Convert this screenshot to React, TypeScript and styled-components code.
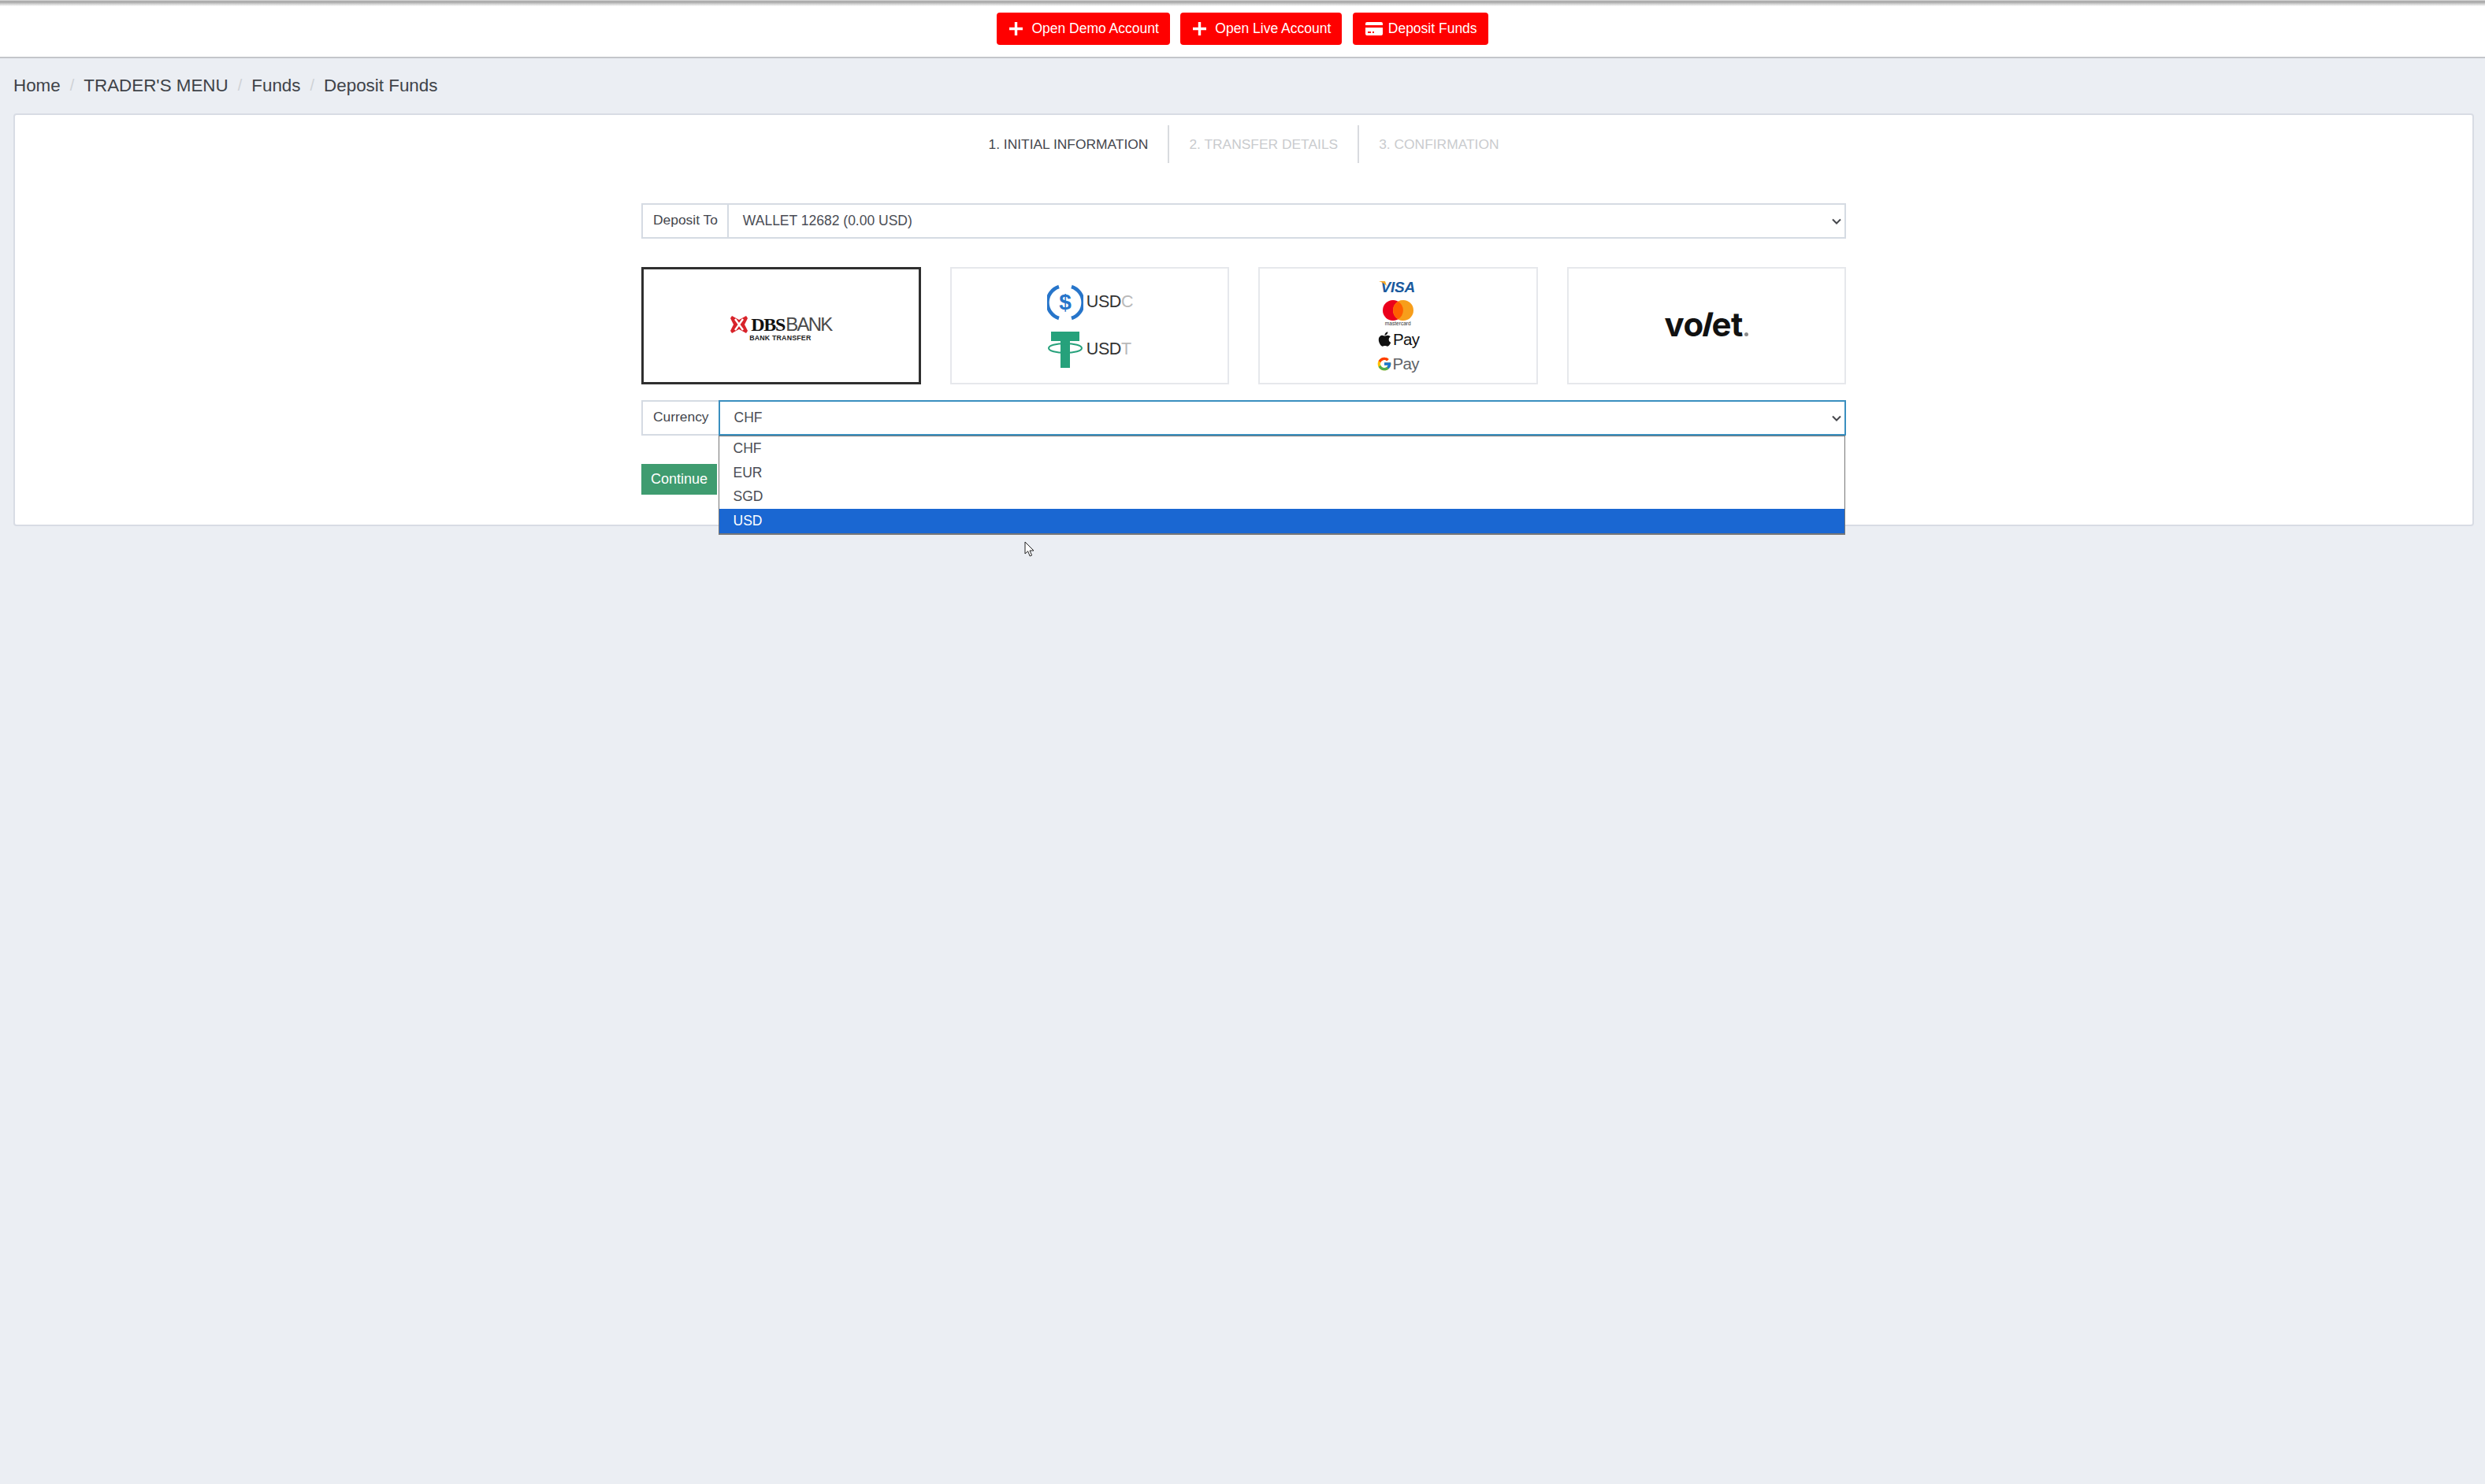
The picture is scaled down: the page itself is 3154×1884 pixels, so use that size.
import React from 'react';
import styled, {createGlobalStyle} from 'styled-components';
import {FaApple} from 'react-icons/fa';
import {FcGoogle} from 'react-icons/fc';

const GlobalStyle = createGlobalStyle`
  html, body {
    margin: 0;
    padding: 0;
    background: #ebeef3;
    font-family: "Liberation Sans", Arial, sans-serif;
  }
  * {
    box-sizing: border-box;
  }
`;

const Page = styled.div`
  width: 3154px;
  height: 1884px;
  background: #ebeef3;
  overflow: hidden;
`;

const TopBar = styled.div`
  height: 74px;
  padding: 16px 0 0 0;
  display: flex;
  justify-content: center;
  gap: 13.5px;
  background: linear-gradient(#e0e0e0 0, #a0a0a0 2px, #ffffff 8px);
  border-bottom: 2px solid #c4c6ca;
`;

const RedButton = styled.div`
  height: 41px;
  padding: 0 14px 0 16px;
  display: flex;
  align-items: center;
  gap: ${props => (props.$wide ? '7px' : '11px')};
  background: #ff0000;
  border-radius: 4px;
  color: #ffffff;
  font-size: 17.5px;
`;

const Breadcrumb = styled.div`
  height: 70px;
  padding: 0 0 1px 17px;
  display: flex;
  align-items: center;
  font-size: 22.4px;
  color: #3f4349;
`;

const CrumbSlash = styled.span`
  margin: 0 12px;
  color: #cfd2d6;
  font-size: 20px;
`;

const Card = styled.div`
  margin: 0 14px 0 17px;
  height: 524px;
  padding-top: 13px;
  background: #ffffff;
  border: 2px solid #d8dce4;
  border-radius: 4px;
`;

const Steps = styled.div`
  display: flex;
  justify-content: center;
`;

const Step = styled.div`
  height: 48px;
  padding: 0 25px;
  display: flex;
  align-items: center;
  font-size: 17.4px;
  color: ${props => (props.$active ? '#43464d' : '#c9cbce')};
  border-right: ${props => (props.$last ? 'none' : '2px solid #d9dbdf')};
`;

const Form = styled.div`
  width: 1529px;
  margin: 51px auto 0;
`;

const InputRow = styled.div`
  height: 45px;
  margin-top: ${props => props.$top || 0}px;
  display: flex;
`;

const InputLabel = styled.div`
  padding: 0 12px 2px 13px;
  display: flex;
  align-items: center;
  background: #ffffff;
  border: 2px solid #d5dbe3;
  border-right: none;
  font-size: 17.4px;
  color: #43464d;
`;

const SelectWrap = styled.div`
  position: relative;
  flex: 1;
`;

const SelectBox = styled.div`
  height: 45px;
  padding: 0 4px 0 18px;
  display: flex;
  align-items: center;
  justify-content: space-between;
  background: #ffffff;
  border: 2px solid ${props => (props.$focused ? '#3a8fbf' : '#d5dbe3')};
  font-size: 17.5px;
  color: #4a4d55;
`;

const DropList = styled.div`
  position: absolute;
  top: 45px;
  left: 0;
  right: 1px;
  z-index: 5;
  background: #ffffff;
  border: 1px solid #767676;
  border-bottom: 2px solid #767676;
`;

const Option = styled.div`
  height: 30.8px;
  padding-left: 18px;
  display: flex;
  align-items: center;
  font-size: 17.5px;
  background: ${props => (props.$selected ? '#1a67d2' : '#ffffff')};
  color: ${props => (props.$selected ? '#ffffff' : '#4a4d55')};
`;

const Pointer = styled.svg`
  position: absolute;
  left: 388px;
  top: 179px;
  z-index: 6;
`;

const Methods = styled.div`
  margin-top: 36px;
  display: grid;
  grid-template-columns: repeat(4, 1fr);
  gap: 37px;
`;

const Method = styled.div`
  height: 149px;
  display: flex;
  flex-direction: column;
  align-items: center;
  justify-content: center;
  border: ${props => (props.$active ? '3px solid #2f2f2f' : '2px solid #e6e8ec')};
`;

const Continue = styled.div`
  width: 96px;
  height: 39px;
  margin-top: 36px;
  display: flex;
  align-items: center;
  justify-content: center;
  background: #3f9c70;
  color: #ffffff;
  font-size: 18px;
`;

/* logos */
const DbsLogo = styled.div`
  display: flex;
  flex-direction: column;
  margin-top: 7px;
`;

const DbsTop = styled.div`
  display: flex;
  align-items: center;
  gap: 4px;
`;

const DbsName = styled.span`
  font-family: "Liberation Serif", serif;
  font-weight: 700;
  font-size: 24px;
  line-height: 24px;
  letter-spacing: -1.2px;
  color: #111111;
`;

const DbsBank = styled.span`
  font-family: "Liberation Sans", sans-serif;
  font-size: 24px;
  line-height: 24px;
  letter-spacing: -1.8px;
  margin-left: 1px;
  color: #4a4a4a;
`;

const DbsSub = styled.span`
  margin: 0 0 0 24px;
  font-size: 8.8px;
  line-height: 10px;
  font-weight: 700;
  letter-spacing: 0.2px;
  color: #222222;
`;

const CoinRow = styled.div`
  width: 108px;
  height: ${props => props.$height}px;
  margin-top: ${props => props.$top || 0}px;
  display: flex;
  align-items: center;
  gap: 4px;
`;

const CoinIconSlot = styled.span`
  display: flex;
  flex-shrink: 0;
`;

const CoinName = styled.span`
  font-size: 21.5px;
  letter-spacing: -0.4px;
  color: #333333;
`;

const CoinFade = styled.span`
  color: #b9b9b9;
`;

const VisaText = styled.span`
  position: relative;
  margin-top: 2px;
  font-size: 19px;
  line-height: 18px;
  font-weight: 700;
  font-style: italic;
  letter-spacing: -0.2px;
  color: #1a5a9e;
`;

const MasterBlock = styled.div`
  margin-top: 7px;
  display: flex;
  flex-direction: column;
  align-items: center;
`;

const MasterText = styled.span`
  font-size: 6.6px;
  line-height: 7px;
  color: #333333;
`;

const PayRow = styled.div`
  height: 24px;
  margin-top: ${props => props.$top}px;
  display: flex;
  align-items: center;
  gap: 0;
  font-size: 20.5px;
  letter-spacing: -0.6px;
  color: ${props => props.$color};
`;

const VoletText = styled.div`
  margin-top: -3px;
  font-family: Inter, sans-serif;
  font-weight: 700;
  font-size: 42px;
  line-height: 44px;
  letter-spacing: -0.5px;
  color: #111111;
`;

const VoletSlant = styled.span`
  display: inline-block;
  transform: skewX(-14deg);
`;

const VoletDot = styled.span`
  display: inline-block;
  width: 5px;
  height: 5px;
  margin-left: 2px;
  border-radius: 50%;
  background: #8a8a8a;
`;

const Chevron = () => (
  <svg width="12" height="8" viewBox="0 0 12 8">
    <path d="M1 1.5 L6 6.5 L11 1.5" fill="none" stroke="#45474c" strokeWidth="2" />
  </svg>
);

const PlusIcon = () => (
  <svg width="17" height="17" viewBox="0 0 17 17">
    <path d="M6.8 0 H10.2 V6.8 H17 V10.2 H10.2 V17 H6.8 V10.2 H0 V6.8 H6.8 Z" fill="#ffffff" />
  </svg>
);

const CardIcon = () => (
  <svg width="22" height="17" viewBox="0 0 22 17">
    <path
      d="M2 0 H20 A2 2 0 0 1 22 2 V4 H0 V2 A2 2 0 0 1 2 0 Z M0 7 H22 V15 A2 2 0 0 1 20 17 H2 A2 2 0 0 1 0 15 Z"
      fill="#ffffff"
    />
    <path d="M3 12 H7 V14 H3 Z M9 12 H11 V14 H9 Z" fill="#ff0000" />
  </svg>
);

const DbsMark = () => (
  <svg width="22" height="24" viewBox="0 0 22 24">
    <path
      d="M2 1 L11 6 L20 1 L22 4 L18 12 L22 20 L20 23 L11 18 L2 23 L0 20 L4 12 L0 4 Z"
      fill="#d8232a"
    />
    <path d="M6 5 L16 19 M16 5 L6 19" stroke="#ffffff" strokeWidth="2.4" />
  </svg>
);

const UsdcMark = () => (
  <svg width="46" height="46" viewBox="0 0 46 46">
    <path d="M15 3 A21 21 0 0 0 15 43" fill="none" stroke="#2775ca" strokeWidth="4.5" />
    <path d="M31 3 A21 21 0 0 1 31 43" fill="none" stroke="#2775ca" strokeWidth="4.5" />
    <text x="23" y="32" textAnchor="middle" fontSize="28" fontWeight="700" fill="#2775ca" fontFamily="Liberation Sans">
      $
    </text>
  </svg>
);

const UsdtMark = () => (
  <svg width="46" height="46" viewBox="0 0 46 46">
    <path d="M5 0 H41 V12 H29 V46 H17 V12 H5 Z" fill="#26a17b" />
    <ellipse cx="23" cy="21" rx="21" ry="6" fill="none" stroke="#26a17b" strokeWidth="2" />
  </svg>
);

const MasterMark = () => (
  <svg width="39" height="26" viewBox="0 0 39 26">
    <circle cx="13" cy="13" r="13" fill="#eb001b" />
    <circle cx="26" cy="13" r="13" fill="#f79e1b" />
    <path d="M19.5 1.8 A13 13 0 0 1 19.5 24.2 A13 13 0 0 1 19.5 1.8 Z" fill="#ff5f00" />
  </svg>
);

const VisaTip = () => (
  <svg width="10" height="6" viewBox="0 0 10 6" style={{position: 'absolute', left: -2, top: 1}}>
    <path d="M0 0 H8 L10 6 C7 3 4 1 0 0 Z" fill="#f7a823" />
  </svg>
);

const CursorArrow = () => (
  <Pointer width="14" height="21" viewBox="0 0 14 21">
    <path
      d="M1 1 V16 L4.6 12.8 L7.2 19 L9.6 18 L7 12 H12 Z"
      fill="#ffffff"
      stroke="#222222"
      strokeWidth="1"
    />
  </Pointer>
);

const crumbs: string[] = ['Home', "TRADER'S MENU", 'Funds', 'Deposit Funds'];
const currencies: string[] = ['CHF', 'EUR', 'SGD', 'USD'];

const App = (): JSX.Element => {
  return (
    <Page>
      <GlobalStyle />
      <TopBar>
        <RedButton>
          <PlusIcon />
          Open Demo Account
        </RedButton>
        <RedButton>
          <PlusIcon />
          Open Live Account
        </RedButton>
        <RedButton $wide>
          <CardIcon />
          Deposit Funds
        </RedButton>
      </TopBar>

      <Breadcrumb>
        {crumbs.map((crumb, i) => (
          <React.Fragment key={crumb}>
            {i > 0 && <CrumbSlash>/</CrumbSlash>}
            {crumb}
          </React.Fragment>
        ))}
      </Breadcrumb>

      <Card>
        <Steps>
          <Step $active>1. INITIAL INFORMATION</Step>
          <Step>2. TRANSFER DETAILS</Step>
          <Step $last>3. CONFIRMATION</Step>
        </Steps>

        <Form>
          <InputRow>
            <InputLabel>Deposit To</InputLabel>
            <SelectWrap>
              <SelectBox>
                WALLET 12682 (0.00 USD)
                <Chevron />
              </SelectBox>
            </SelectWrap>
          </InputRow>

          <Methods>
            <Method $active>
              <DbsLogo>
                <DbsTop>
                  <DbsMark />
                  <span>
                    <DbsName>DBS</DbsName>
                    <DbsBank>BANK</DbsBank>
                  </span>
                </DbsTop>
                <DbsSub>BANK TRANSFER</DbsSub>
              </DbsLogo>
            </Method>
            <Method>
              <CoinRow $height={46}>
                <CoinIconSlot>
                  <UsdcMark />
                </CoinIconSlot>
                <CoinName>
                  USD<CoinFade>C</CoinFade>
                </CoinName>
              </CoinRow>
              <CoinRow $height={46} $top={14}>
                <CoinIconSlot>
                  <UsdtMark />
                </CoinIconSlot>
                <CoinName>
                  USD<CoinFade>T</CoinFade>
                </CoinName>
              </CoinRow>
            </Method>
            <Method>
              <VisaText>
                <VisaTip />
                VISA
              </VisaText>
              <MasterBlock>
                <MasterMark />
                <MasterText>mastercard</MasterText>
              </MasterBlock>
              <PayRow $top={5} $color="#111111">
                <FaApple size={21} />
                Pay
              </PayRow>
              <PayRow $top={7} $color="#5f6368">
                <FcGoogle size={20} />
                Pay
              </PayRow>
            </Method>
            <Method>
              <VoletText>
                vo<VoletSlant>l</VoletSlant>et
                <VoletDot />
              </VoletText>
            </Method>
          </Methods>

          <InputRow $top={20}>
            <InputLabel>Currency</InputLabel>
            <SelectWrap>
              <SelectBox $focused>
                CHF
                <Chevron />
              </SelectBox>
              <DropList>
                {currencies.map(code => (
                  <Option key={code} $selected={code === 'USD'}>
                    {code}
                  </Option>
                ))}
              </DropList>
              <CursorArrow />
            </SelectWrap>
          </InputRow>

          <Continue>Continue</Continue>
        </Form>
      </Card>
    </Page>
  );
};

export default App;
